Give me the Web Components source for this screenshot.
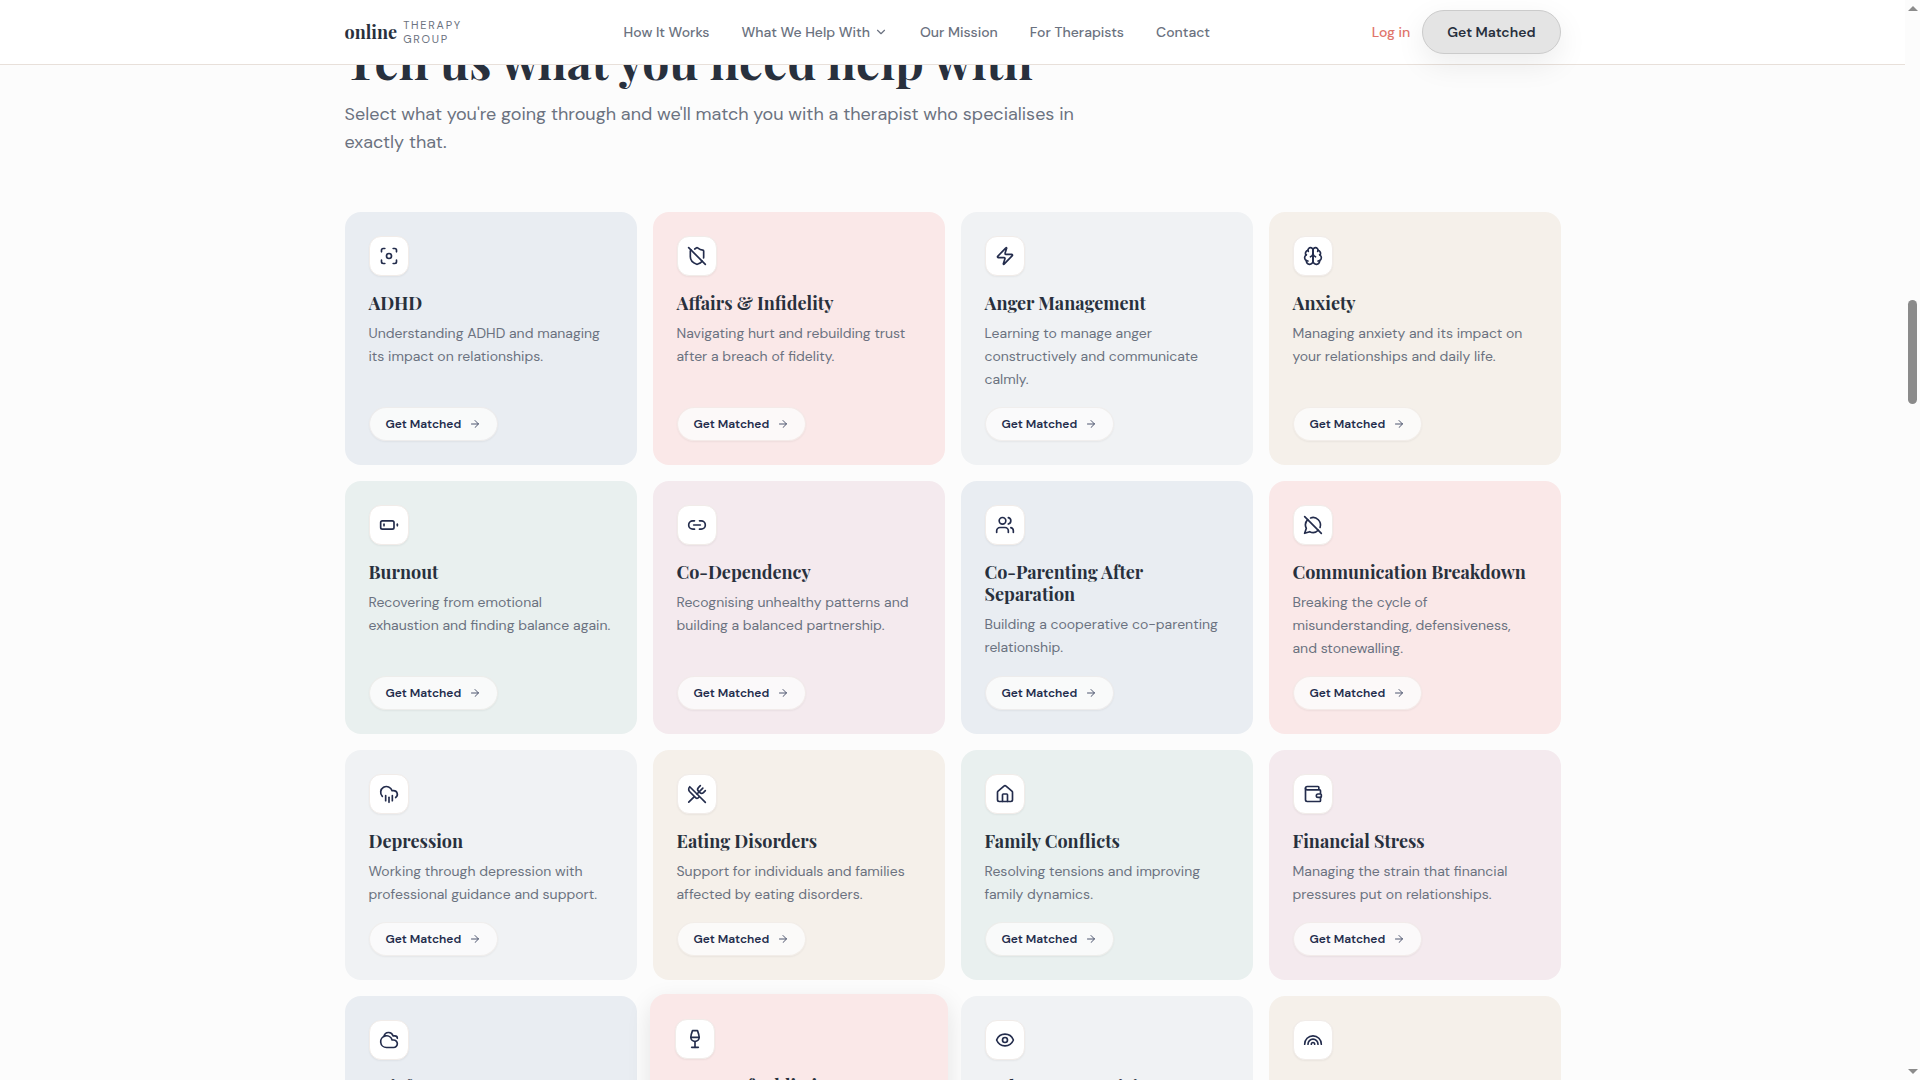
<!DOCTYPE html>
<html lang="en">
<head>
<meta charset="utf-8">
<title>Online Therapy Group</title>
<style>
  :root {
    --sans: "DM Sans", "Open Sans", "Liberation Sans", sans-serif;
    --serif: "Playfair Display", "Liberation Serif", serif;
    --ink: #28303d;
    --navy: #232c4c;
    --muted: #6b7280;
    --line: #e8e0da;
    --coral: #e0746a;
    --page: #fcfcfc;
  }
  html, body { margin: 0; height: 100%; }
  body { background: var(--page); color: var(--ink); font-family: var(--sans); overflow: hidden; }
</style>
</head>
<body>
<otg-app></otg-app>
<script>
const ICONS = {
  focus: '<circle cx="12" cy="12" r="3"/><path d="M3 7V5a2 2 0 0 1 2-2h2"/><path d="M17 3h2a2 2 0 0 1 2 2v2"/><path d="M21 17v2a2 2 0 0 1-2 2h-2"/><path d="M7 21H5a2 2 0 0 1-2-2v-2"/>',
  shieldOff: '<path d="m2 2 20 20"/><path d="M5 5a1 1 0 0 0-1 1v7c0 5 3.5 7.5 7.67 8.94a1 1 0 0 0 .67.01c2.35-.82 4.48-1.97 5.9-3.71"/><path d="M9.309 3.652A12.252 12.252 0 0 0 11.24 2.28a1.17 1.17 0 0 1 1.52 0C14.51 3.81 17 5 19 5a1 1 0 0 1 1 1v7a9.784 9.784 0 0 1-.08 1.264"/>',
  zap: '<path d="M4 14a1 1 0 0 1-.78-1.63l9.9-10.2a.5.5 0 0 1 .86.46l-1.92 6.02A1 1 0 0 0 13 10h7a1 1 0 0 1 .78 1.63l-9.9 10.2a.5.5 0 0 1-.86-.46l1.92-6.02A1 1 0 0 0 11 14z"/>',
  brain: '<path d="M12 5a3 3 0 1 0-5.997.125 4 4 0 0 0-2.526 5.77 4 4 0 0 0 .556 6.588A4 4 0 1 0 12 18Z"/><path d="M12 5a3 3 0 1 1 5.997.125 4 4 0 0 1 2.526 5.77 4 4 0 0 1-.556 6.588A4 4 0 1 1 12 18Z"/><path d="M15 13a4.5 4.5 0 0 1-3-4 4.5 4.5 0 0 1-3 4"/><path d="M17.599 6.5a3 3 0 0 0 .399-1.375"/><path d="M6.003 5.125A3 3 0 0 0 6.401 6.5"/><path d="M3.477 10.896a4 4 0 0 1 .585-.396"/><path d="M19.938 10.5a4 4 0 0 1 .585.396"/><path d="M6 18a4 4 0 0 1-1.967-.516"/><path d="M19.967 17.484A4 4 0 0 1 18 18"/>',
  batteryLow: '<rect width="16" height="10" x="2" y="7" rx="2"/><path d="M22 11v2"/><path d="M6 11v2"/>',
  link: '<path d="M9 17H7A5 5 0 0 1 7 7h2"/><path d="M15 7h2a5 5 0 1 1 0 10h-2"/><path d="M8 12h8"/>',
  users: '<path d="M16 21v-2a4 4 0 0 0-4-4H6a4 4 0 0 0-4 4v2"/><circle cx="9" cy="7" r="4"/><path d="M22 21v-2a4 4 0 0 0-3-3.87"/><path d="M16 3.13a4 4 0 0 1 0 7.75"/>',
  messageOff: '<path d="M20.5 14.9A9 9 0 0 0 9.1 3.5"/><path d="m2 2 20 20"/><path d="M5.6 5.6C3 8.3 2.2 12.5 4 16l-2 6 6-2c3.4 1.8 7.6 1.1 10.3-1.7"/>',
  cloudRain: '<path d="M4 14.899A7 7 0 1 1 15.71 8h1.79a4.5 4.5 0 0 1 2.5 8.242"/><path d="M16 14v6"/><path d="M8 14v6"/><path d="M12 16v6"/>',
  utensils: '<path d="m16 2-2.3 2.3a3 3 0 0 0 0 4.2l1.8 1.8a3 3 0 0 0 4.2 0L22 8"/><path d="M15 15 3.3 3.3a4.2 4.2 0 0 0 0 6l7.3 7.3c.7.7 2 .7 2.8 0L15 15Zm0 0 7 7"/><path d="m2.1 21.8 6.4-6.3"/><path d="m19 5-7 7"/>',
  house: '<path d="M15 21v-8a1 1 0 0 0-1-1h-4a1 1 0 0 0-1 1v8"/><path d="M3 10a2 2 0 0 1 .709-1.528l7-5.999a2 2 0 0 1 2.582 0l7 5.999A2 2 0 0 1 21 10v9a2 2 0 0 1-2 2H5a2 2 0 0 1-2-2z"/>',
  wallet: '<path d="M19 7V4a1 1 0 0 0-1-1H5a2 2 0 0 0 0 4h15a1 1 0 0 1 1 1v4h-3a2 2 0 0 0 0 4h3a1 1 0 0 0 1-1v-2a1 1 0 0 0-1-1"/><path d="M3 5v14a2 2 0 0 0 2 2h15a1 1 0 0 0 1-1v-4"/>',
  cloudy: '<path d="M17.5 21H9a7 7 0 1 1 6.71-9h1.79a4.5 4.5 0 1 1 0 9Z"/><path d="M22 10a3 3 0 0 0-3-3h-2.207a5.502 5.502 0 0 0-10.702.5"/>',
  wine: '<path d="M8 22h8"/><path d="M7 10h10"/><path d="M12 15v7"/><path d="M12 15a5 5 0 0 0 5-5c0-2-.5-4-2-8H9c-1.5 4-2 6-2 8a5 5 0 0 0 5 5Z"/>',
  eye: '<path d="M2.062 12.348a1 1 0 0 1 0-.696 10.75 10.75 0 0 1 19.876 0 1 1 0 0 1 0 .696 10.75 10.75 0 0 1-19.876 0"/><circle cx="12" cy="12" r="3"/>',
  rainbow: '<path d="M22 17a10 10 0 0 0-20 0"/><path d="M6 17a6 6 0 0 1 12 0"/><path d="M10 17a2 2 0 0 1 4 0"/>',
  arrow: '<path d="M5 12h14"/><path d="m12 5 7 7-7 7"/>',
  chevron: '<path d="m6 9 6 6 6-6"/>'
};

class OtgElement extends HTMLElement {
  render(html) {
    if (!this.shadowRoot) this.attachShadow({ mode: 'open' });
    this.shadowRoot.innerHTML = html;
  }
}

customElements.define('otg-icon', class extends OtgElement {
  connectedCallback() {
    this.render(`<style>
      :host { display: block; width: 20px; height: 20px; }
      svg { display: block; width: 100%; height: 100%; }
    </style>
    <svg viewBox="0 0 24 24" fill="none" stroke="currentColor" stroke-width="2" stroke-linecap="round" stroke-linejoin="round" aria-hidden="true">${ICONS[this.getAttribute('name')]}</svg>`);
  }
});

customElements.define('otg-logo', class extends OtgElement {
  connectedCallback() {
    this.render(`<style>
      :host { display: block; }
      a { display: flex; align-items: center; gap: 6px; color: var(--ink); text-decoration: none; }
      b { font: 700 18px/28px var(--serif); }
      span { width: min-content; font-size: 11px; line-height: 14px; letter-spacing: .16em; color: var(--muted); }
    </style>
    <a href="#"><b>online</b><span>THERAPY GROUP</span></a>`);
  }
});

customElements.define('otg-nav-link', class extends OtgElement {
  connectedCallback() {
    this.render(`<style>
      :host { display: block; }
      a { display: flex; align-items: center; gap: 4px; font-size: 14px; line-height: 20px; font-weight: 500; color: var(--link, var(--muted)); text-decoration: none; white-space: nowrap; }
      otg-icon { width: 14px; height: 14px; }
    </style>
    <a href="#"><slot></slot>${this.hasAttribute('menu') ? '<otg-icon name="chevron"></otg-icon>' : ''}</a>`);
  }
});

customElements.define('otg-header', class extends OtgElement {
  connectedCallback() {
    this.render(`<style>
      :host { display: block; background: #fff; border-bottom: 1px solid var(--line); }
      .bar { display: flex; align-items: center; justify-content: space-between; max-width: 1216px; height: 64px; margin: 0 auto; padding: 0 32px; }
      nav { display: flex; gap: 32px; }
      .account { display: flex; align-items: center; gap: 12px; }
      .account otg-nav-link { --link: var(--coral); }
      button { box-sizing: border-box; height: 44px; padding: 0 24px; border: 1px solid #cbcbcb; border-radius: 22px; background: #e4e4e4; color: var(--ink); font: 600 14px/20px var(--sans); box-shadow: 0 10px 30px rgba(0, 0, 0, .08); }
    </style>
    <div class="bar">
      <otg-logo></otg-logo>
      <nav aria-label="Main">
        <otg-nav-link>How It Works</otg-nav-link>
        <otg-nav-link menu>What We Help With</otg-nav-link>
        <otg-nav-link>Our Mission</otg-nav-link>
        <otg-nav-link>For Therapists</otg-nav-link>
        <otg-nav-link>Contact</otg-nav-link>
      </nav>
      <div class="account">
        <otg-nav-link>Log in</otg-nav-link>
        <button type="button">Get Matched</button>
      </div>
    </div>`);
  }
});

customElements.define('otg-card', class extends OtgElement {
  connectedCallback() {
    this.render(`<style>
      :host { display: flex; flex-direction: column; align-items: flex-start; box-sizing: border-box; padding: 24px; border-radius: 16px; background: var(--tone); }
      :host([tone=blue]) { --tone: #e9edf2; }
      :host([tone=pink]) { --tone: #fae8e8; }
      :host([tone=grey]) { --tone: #f0f2f4; }
      :host([tone=sand]) { --tone: #f5f0ea; }
      :host([tone=green]) { --tone: #e9f0ef; }
      :host([tone=mauve]) { --tone: #f4eaee; }
      :host([raised]) { margin: -2px -3px; padding: 25px; box-shadow: 0 8px 24px rgba(0, 0, 0, .1); }
      .tile { display: grid; place-items: center; box-sizing: border-box; width: 40px; height: 40px; border: 1px solid #f1ece9; border-radius: 12px; background: #fff; color: var(--navy); box-shadow: 0 1px 2px rgba(0, 0, 0, .05); }
      h3 { margin: 16px 0 8px; font: 700 18px/22px var(--serif); color: var(--ink); }
      p { margin: 0 0 16px; font-size: 14px; line-height: 23px; color: var(--muted); }
      button { display: flex; align-items: center; gap: 8px; box-sizing: border-box; height: 34px; margin-top: auto; padding: 0 16px; border: 1px solid rgba(240, 235, 232, .6); border-radius: 17px; background: rgba(252, 252, 252, .85); background-clip: padding-box; color: var(--navy); font: 600 12px/16px var(--sans); box-shadow: 0 1px 2px rgba(0, 0, 0, .05); }
      button otg-icon { width: 12px; height: 12px; opacity: .8; }
    </style>
    <div class="tile"><otg-icon name="${this.getAttribute('icon')}"></otg-icon></div>
    <h3><slot name="title"></slot></h3>
    <p><slot></slot></p>
    <button type="button">Get Matched<otg-icon name="arrow"></otg-icon></button>`);
  }
});

const TOPICS = [
  ['blue', 'focus', 'ADHD', 'Understanding ADHD and managing its impact on relationships.'],
  ['pink', 'shieldOff', 'Affairs &amp; Infidelity', 'Navigating hurt and rebuilding trust after a breach of fidelity.'],
  ['grey', 'zap', 'Anger Management', 'Learning to manage anger constructively and communicate calmly.'],
  ['sand', 'brain', 'Anxiety', 'Managing anxiety and its impact on your relationships and daily life.'],
  ['green', 'batteryLow', 'Burnout', 'Recovering from emotional exhaustion and finding balance again.'],
  ['mauve', 'link', 'Co-Dependency', 'Recognising unhealthy patterns and building a balanced partnership.'],
  ['blue', 'users', 'Co-Parenting After Separation', 'Building a cooperative co-parenting relationship.'],
  ['pink', 'messageOff', 'Communication Breakdown', 'Breaking the cycle of misunderstanding, defensiveness, and stonewalling.'],
  ['grey', 'cloudRain', 'Depression', 'Working through depression with professional guidance and support.'],
  ['sand', 'utensils', 'Eating Disorders', 'Support for individuals and families affected by eating disorders.'],
  ['green', 'house', 'Family Conflicts', 'Resolving tensions and improving family dynamics.'],
  ['mauve', 'wallet', 'Financial Stress', 'Managing the strain that financial pressures put on relationships.'],
  ['blue', 'cloudy', 'Grief', ''],
  ['pink', 'wine', 'Impact of Addiction', '', 'raised'],
  ['grey', 'eye', 'Jealousy &amp; Suspicion', ''],
  ['sand', 'rainbow', 'LGBTQ+', '']
];

customElements.define('otg-topics', class extends OtgElement {
  connectedCallback() {
    this.render(`<style>
      :host { display: block; max-width: 1216px; margin: 0 auto; padding: 32px 32px 0; }
      h2 { margin: 0; font: 700 48px/56px var(--serif); color: var(--ink); }
      .lead { max-width: 768px; margin: 12px 0 56px; font-size: 18px; line-height: 28px; color: var(--muted); }
      .grid { display: grid; grid-template-columns: repeat(4, 1fr); gap: 16px; }
    </style>
    <h2>Tell us what you need help with</h2>
    <p class="lead">Select what you're going through and we'll match you with a therapist who specialises in exactly that.</p>
    <div class="grid">${TOPICS.map(([tone, icon, title, text, flag = '']) =>
      `<otg-card tone="${tone}" icon="${icon}" ${flag}><span slot="title">${title}</span>${text}</otg-card>`).join('')}</div>`);
  }
});

customElements.define('otg-scrollbar', class extends OtgElement {
  connectedCallback() {
    this.render(`<style>
      :host { display: flex; flex-direction: column; align-items: center; box-sizing: border-box; width: 15px; padding: 6px 0; background: var(--page); }
      i { border: 5px solid transparent; border-top: 0; border-bottom: 5px solid #8b8b8b; }
      i:last-child { border-top: 5px solid #8b8b8b; border-bottom: 0; }
      .before { flex: 289; }
      .thumb { flex: 104; width: 9px; border-radius: 5px; background: #8b8b8b; }
      .after { flex: 665; }
    </style>
    <i></i><div class="before"></div><div class="thumb"></div><div class="after"></div><i></i>`);
  }
});

customElements.define('otg-app', class extends OtgElement {
  connectedCallback() {
    this.render(`<style>
      :host { display: grid; grid-template-columns: minmax(0, 1fr) auto; height: 100vh; }
      .view { position: relative; overflow: hidden; }
      otg-header { position: absolute; top: 0; left: 0; right: 0; z-index: 1; }
    </style>
    <div class="view">
      <otg-header></otg-header>
      <main><otg-topics></otg-topics></main>
    </div>
    <otg-scrollbar></otg-scrollbar>`);
  }
});
</script>
</body>
</html>
